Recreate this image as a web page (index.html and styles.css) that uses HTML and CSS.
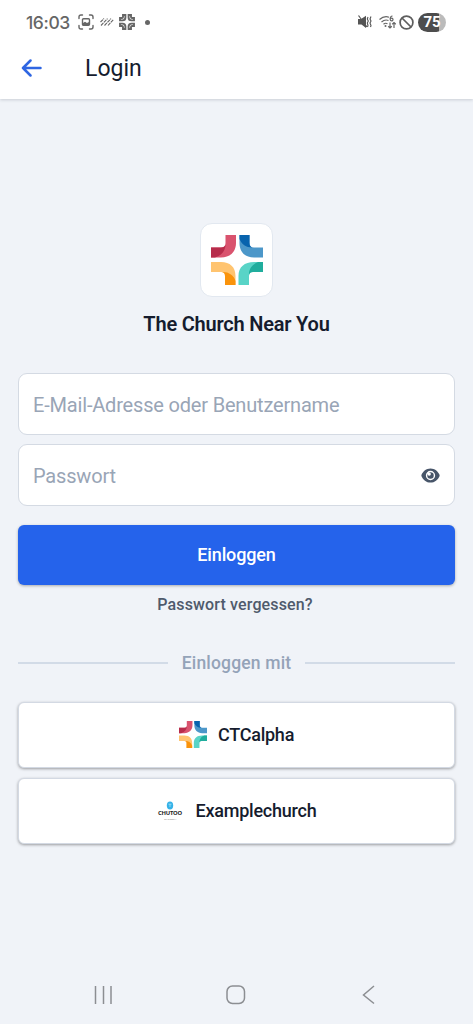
FILE: index.html
```html
<!DOCTYPE html>
<html lang="de">
<head>
<meta charset="utf-8">
<title>Login</title>
<link rel="stylesheet" href="styles.css">
</head>
<body>
<svg class="defs" aria-hidden="true">
  <symbol id="cross" viewBox="0 0 52 50">
    <path fill="#d9536e" d="M14.500 0H25V8C25 17 19 22.500 10 22.500H0V12.500H10C13 12.500 14.500 11 14.500 8Z"/>
    <path fill="#b72c4b" d="M0 12.500H10C12.500 12.500 14 11.500 14.500 9.500C14.500 15 11 20.500 4 22.500H0Z"/>
    <path fill="#4c97c9" d="M28.500 0H38.500V8C38.500 11 40 12.500 43 12.500H52V22.500H43C34 22.500 28.500 17 28.500 8Z"/>
    <path fill="#0863ad" d="M28.500 0H38.500V8C38.500 10.500 39.500 12 41.500 12.500C35 12.500 30.500 9 28.500 4Z"/>
    <path fill="#ffc470" d="M0 27H10C19 27 24.500 32 24.500 41V50H14V41C14 38.500 12.500 37 10 37H0Z"/>
    <path fill="#fa930b" d="M24.500 46V50H14V41C14 38.500 13 37.500 11 37C17 36.500 23 40 24.500 46Z"/>
    <path fill="#59d4c7" d="M52 27H43C33.500 27 27.500 32 27.500 41V50H38V41C38 38.500 39.500 37 42 37H52Z"/>
    <path fill="#20ad9d" d="M52 27V37H42C39.500 37 38.500 38 38 40C37.500 34 41.500 29 47 27Z"/>
  </symbol>
</svg>
<header class="top">
  <div class="status">
    <span class="clock">16:03</span>
    <svg class="shot" width="16" height="16" viewBox="0 0 16 16" fill="none" stroke="#666" stroke-width="1.400" stroke-linecap="round"><path d="M1 4.500V3Q1 1 3 1H4.500M11.500 1H13Q15 1 15 3V4.500M15 11.500V13Q15 15 13 15H11.500M4.500 15H3Q1 15 1 13V11.500"/><rect x="4.500" y="4.700" width="7" height="6.600" rx="1"/><path fill="#666" stroke="none" d="M5 11V9L7 7.800L9 9L11 8V11Z"/></svg>
    <svg class="lines" width="14" height="8" viewBox="0 0 14 8" stroke="#666" stroke-width="1.100" fill="none"><path d="M.5 4L4 .5M1 7.500L7.500 .7M4.500 7.500L11 .7M8 7.500L13.500 1.500" stroke-dasharray="3.500 .7"/></svg>
    <svg class="notice" width="16" height="16" viewBox="0 0 16 16" fill="none" stroke="#666" stroke-width="1.900"><path d="M4 1H6.400V3.500Q6.400 6.400 3.500 6.400H1V4H3Q4 4 4 3ZM12 1H9.600V3.500Q9.600 6.400 12.500 6.400H15V4H13Q12 4 12 3ZM4 15H6.400V12.500Q6.400 9.600 3.500 9.600H1V12H3Q4 12 4 13ZM12 15H9.600V12.500Q9.600 9.600 12.500 9.600H15V12H13Q12 12 12 13Z"/></svg>
    <span class="dot"></span>
    <span class="spacer"></span>
    <svg class="mute" width="14" height="14" viewBox="0 0 14 14"><path fill="#555" d="M0 4H3L8 .8V13L3.500 9.500H0Z"/><path d="M.5 .5L9 12" stroke="#555" stroke-width="1.200"/><path d="M10 2L9.300 4L10.300 6L9.300 8L10 10.500L9.500 12M13 1.500L12 4L13 6L12 8L13 10.500L12.500 12" fill="none" stroke="#555" stroke-width="1.100"/></svg>
    <svg class="wifi" width="17" height="14" viewBox="0 0 17 14" fill="none" stroke="#666" stroke-width="1.200"><path d="M.5 4.500Q5 .5 10 2.200M2.500 7Q6 4 9.500 5.500M4.500 9.300Q6.500 7.500 8.500 8.800"/><circle cx="6.500" cy="11" r="1" fill="#666" stroke="none"/><path d="M13.500 1Q11.200 1 11.200 4"/><circle cx="12.600" cy="4.500" r="1.400"/><path d="M11 7.500V13M9.200 11.300L11 13L12.800 11.300M15 13V7.500M13.200 9.200L15 7.500L16.800 9.200"/></svg>
    <svg width="15" height="15" viewBox="0 0 15 15" fill="none" stroke="#5e5e5e" stroke-width="1.700"><circle cx="7.500" cy="7.500" r="6.400"/><path d="M3 3L12 12"/></svg>
    <span class="battery">75</span>
  </div>
  <div class="bar">
    <svg width="21" height="18" viewBox="0 0 21 18" fill="none" stroke="#2f66e2" stroke-width="2.500" stroke-linecap="round" stroke-linejoin="round"><path d="M19.500 9H2M9.500 1.500L2 9L9.500 16.500"/></svg>
    <h1>Login</h1>
  </div>
</header>
<main class="content">
  <div class="logo"><svg width="52" height="50"><use href="#cross"/></svg></div>
  <h2>The Church Near You</h2>
  <div class="field user">E-Mail-Adresse oder Benutzername</div>
  <div class="field pass"><span>Passwort</span>
    <svg width="19" height="15" viewBox="0 0 20 16"><path fill="#475569" d="M10 .5C5.500 .5 2 3.500 .4 7.300Q.1 8 .4 8.700C2 12.500 5.500 15.500 10 15.500S18 12.500 19.600 8.700Q19.900 8 19.600 7.300C18 3.500 14.500 .5 10 .5Z"/><circle cx="10" cy="8" r="4.200" fill="#475569" stroke="#fff" stroke-width="1.500"/><circle cx="8.600" cy="6.500" r="1.800" fill="#fff"/></svg>
  </div>
  <div class="submit"><span>Einloggen</span></div>
  <div class="forgot"><span>Passwort vergessen?</span></div>
  <div class="divider"><span>Einloggen mit</span></div>
  <div class="provider"><svg class="alpha" width="28" height="27"><use href="#cross"/></svg><span>CTCalpha</span></div>
  <div class="provider second">
    <svg class="chutoo" width="26" height="20" viewBox="0 0 26 20"><ellipse cx="13" cy="4.500" rx="3.200" ry="4" fill="#35b2e8"/><path d="M11.500 3.200H14.500M13 3.200V6" stroke="#a5e1f7" stroke-width=".8"/><text x="1" y="14" textLength="24" lengthAdjust="spacingAndGlyphs" font-family="Open Sans, sans-serif" font-size="6" font-weight="700" fill="#222">CHUTOO</text><text x="7" y="18.500" textLength="12" lengthAdjust="spacingAndGlyphs" font-family="Open Sans, sans-serif" font-size="2.200" fill="#777">CHURCH</text></svg>
    <span>Examplechurch</span>
  </div>
</main>
<nav class="system">
  <svg width="19" height="18" viewBox="0 0 19 18" stroke="#8c8e92" stroke-width="1.500"><path d="M1.500 0V18M9.500 0V18M17 0V18"/></svg>
  <svg class="home" width="20" height="20" viewBox="0 0 20 20" fill="none" stroke="#8c8e92" stroke-width="1.500"><rect x="1" y="1" width="17.500" height="17.500" rx="5.500"/></svg>
  <svg width="13" height="20" viewBox="0 0 13 20" fill="none" stroke="#8c8e92" stroke-width="1.500"><path d="M12 1L1.500 10L12 18.500"/></svg>
</nav>
</body>
</html>
```
FILE: styles.css
```css
* { box-sizing: border-box; }
body { margin: 0; height: 1024px; display: flex; flex-direction: column; background: #f0f3f8; font-family: Roboto, sans-serif; color: #151c2e; overflow: hidden; }
svg { flex: none; display: block; }
.defs { position: absolute; width: 0; height: 0; }
.top { height: 99px; flex: none; background: #fff; box-shadow: 0 1px 3px rgba(30, 41, 59, .18); }
.status { height: 44px; display: flex; align-items: center; padding: 0 27px 0 26px; }
.clock { width: 44px; padding-top: 1px; font: 500 17.500px/22px Inter, sans-serif; letter-spacing: -.4px; color: #666; white-space: nowrap; }
.shot { margin-left: 8px; }
.lines { margin-left: 6px; }
.notice { margin-left: 5px; }
.dot { width: 5px; height: 5px; margin-left: 10px; border-radius: 50%; background: #666; }
.spacer { flex: 1; }
.wifi { margin: 0 3px 0 7px; }
.battery { width: 28px; height: 19px; margin-left: 4px; border-radius: 10px; background: linear-gradient(90deg, #4d4d4d 75%, #bbb 75%); color: #fff; font: 700 15px/19px Roboto, sans-serif; text-align: center; }
.bar { height: 49px; display: flex; align-items: center; padding-left: 21px; }
.bar svg { margin-bottom: 1px; }
h1 { margin: 0 0 0 43px; font-size: 23px; line-height: 30px; font-weight: 400; }
.content { flex: 1; display: flex; flex-direction: column; padding: 124px 18px 0; }
.logo { width: 73px; height: 74px; align-self: center; display: flex; align-items: center; justify-content: center; background: #fff; border: 1px solid #e2e8f0; border-radius: 12px; }
h2 { margin: 14px 0 0; font-size: 20px; line-height: 26px; font-weight: 600; text-align: center; letter-spacing: -.2px; }
.field { height: 62px; flex: none; display: flex; align-items: center; justify-content: space-between; padding: 1px 14px 0; background: #fff; border: 1.5px solid #d4dae3; border-radius: 9px; color: #99a5b6; font-size: 20px; letter-spacing: -.18px; }
.user { margin-top: 36px; }
.pass { margin-top: 9px; }
.submit { height: 60px; flex: none; margin-top: 19px; padding-bottom: 2px; display: flex; align-items: center; justify-content: center; background: #2563eb; border-radius: 6px; box-shadow: 0 1px 3px rgba(0, 0, 0, .3); color: #fff; font-size: 18px; font-weight: 500; letter-spacing: -.15px; }
.forgot { margin: 9px 3px 0 0; line-height: 22px; text-align: center; font-size: 16px; font-weight: 500; letter-spacing: .14px; color: #4f5a6c; }
.divider { height: 24px; margin-top: 35px; display: flex; align-items: center; gap: 14px; color: #94a3b8; font-size: 17.500px; font-weight: 500; letter-spacing: .18px; }
.divider::before, .divider::after { content: ""; flex: 1; height: 1.500px; background: #d2dbe7; }
.provider { height: 66px; flex: none; margin-top: 27px; padding-bottom: 1px; display: flex; align-items: center; justify-content: center; background: #fff; border: 1px solid #d3d9e3; border-radius: 6px; box-shadow: 0 1px 3px rgba(0, 0, 0, .36); font-size: 18px; font-weight: 500; letter-spacing: -.23px; }
.second { margin-top: 10px; }
.alpha { margin-right: 11px; }
.chutoo { margin-right: 13px; }
.system { height: 58px; display: flex; align-items: center; justify-content: space-between; padding: 0 98px 0 94px; }
.home { margin-right: 3px; }
```
